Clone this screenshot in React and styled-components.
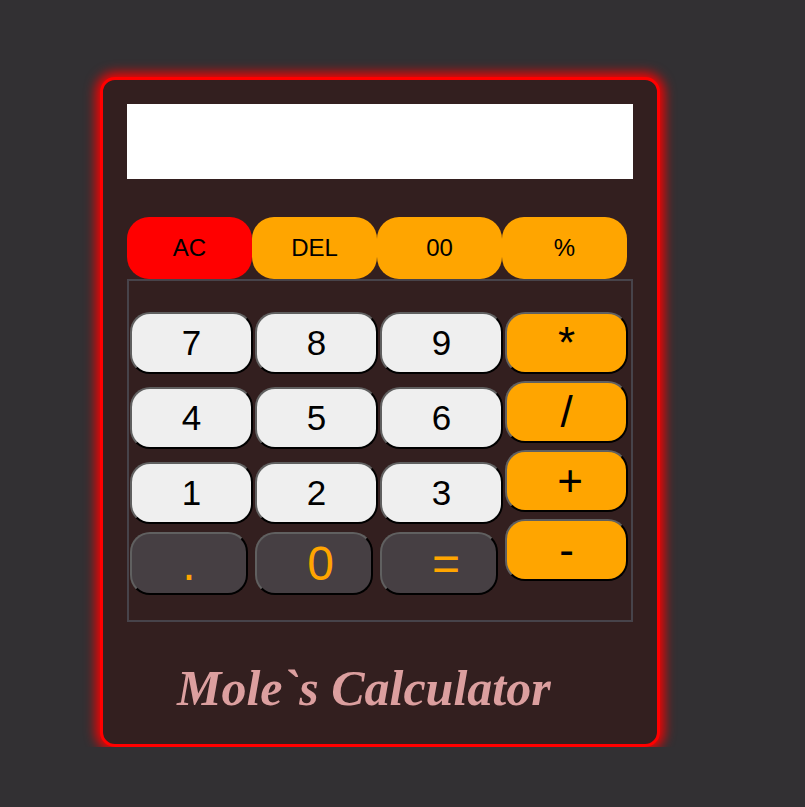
import React from 'react'
import styled, { createGlobalStyle } from 'styled-components'

const GlobalStyle = createGlobalStyle`
  html, body {
    margin: 0;
    padding: 0;
    background: #323033;
    font-family: "Liberation Sans", Arial, sans-serif;
  }
`

const topKeys = [
  { label: 'AC', tone: 'red' },
  { label: 'DEL', tone: 'orange' },
  { label: '00', tone: 'orange' },
  { label: '%', tone: 'orange' },
]

const numberRows = [
  ['7', '8', '9'],
  ['4', '5', '6'],
  ['1', '2', '3'],
]

const bottomKeys = [
  { label: '.', shift: 0 },
  { label: '0', shift: 13 },
  { label: '=', shift: 14 },
]
const operators = [
  { label: '*', shift: 0 },
  { label: '/', shift: 0 },
  { label: '+', shift: 7 },
  { label: '-', shift: 0 },
]

export default function App() {
  return (
    <>
      <GlobalStyle />
      <Page>
        <Calculator>
          <Display />
          <TopRow>
            {topKeys.map((k) => (
              <TopKey key={k.label} tone={k.tone}>{k.label}</TopKey>
            ))}
          </TopRow>
          <Keypad>
            <Numbers>
              {numberRows.map((row, i) => (
                <NumRow key={i}>
                  {row.map((n) => <NumKey key={n}>{n}</NumKey>)}
                </NumRow>
              ))}
              <BottomRow>
                {bottomKeys.map((k) => <DarkKey key={k.label} shift={k.shift}>{k.label}</DarkKey>)}
              </BottomRow>
            </Numbers>
            <Operators>
              {operators.map((op) => <OpKey key={op.label} shift={op.shift}>{op.label}</OpKey>)}
            </Operators>
          </Keypad>
          <Title>Mole`s Calculator</Title>
        </Calculator>
      </Page>
    </>
  )
}

const Page = styled.div`
  padding: 77px 0 0 100px;
`
const Calculator = styled.div`
  width: 506px;
  height: 616px;
  padding: 24px;
  background: #331f1f;
  border: 3px solid #ff0000;
  border-radius: 15px;
  box-shadow: 0 0 12px 4px #ff0000;
`
const Display = styled.div`
  height: 75px;
  background: #fff;
`
const TopRow = styled.div`
  display: flex;
  margin-top: 38px;
`
const TopKey = styled.button`
  width: 125px;
  height: 62px;
  border: none;
  border-radius: 22px;
  background: ${(p) => (p.tone === 'red' ? '#ff0000' : '#ffa500')};
  color: #000;
  font-family: "Liberation Sans", Arial, sans-serif;
  font-size: 24px;
  padding: 0;
`
const Keypad = styled.div`
  display: flex;
  align-items: flex-start;
  box-sizing: border-box;
  height: 343px;
  padding: 31px 0 0 1px;
  border: 2px solid #47434a;
`
const Numbers = styled.div`
  width: 375px;
  display: flex;
  flex-direction: column;
  gap: 13px;
`
const NumRow = styled.div`
  display: flex;
`
const BottomRow = styled.div`
  display: flex;
  margin-top: -5px;
`
const Key = styled.button`
  height: 62px;
  padding: 0 0 0 ${(p) => p.shift || 0}px;
  border: 2px solid;
  border-color: #606060 #000 #000 #606060;
  border-radius: 20px;
  font-family: "Liberation Sans", Arial, sans-serif;
`
const NumKey = styled(Key)`
  width: 123px;
  margin-right: 2px;
  background: #efefef;
  color: #000;
  font-size: 35px;
`
const DarkKey = styled(Key)`
  width: 118px;
  height: 63px;
  margin-right: 7px;
  background: #463f43;
  color: #ffa500;
  font-size: 48px;
`
const Operators = styled.div`
  display: flex;
  flex-direction: column;
  gap: 7px;
`
const OpKey = styled(Key)`
  width: 123px;
  background: #ffa500;
  color: #000;
  font-size: 44px;
`
const Title = styled.h1`
  margin: 37px 0 0 50px;
  font-family: "Liberation Serif", "Times New Roman", serif;
  font-style: italic;
  font-weight: bold;
  font-size: 50px;
  color: #dc9f9f;
`
